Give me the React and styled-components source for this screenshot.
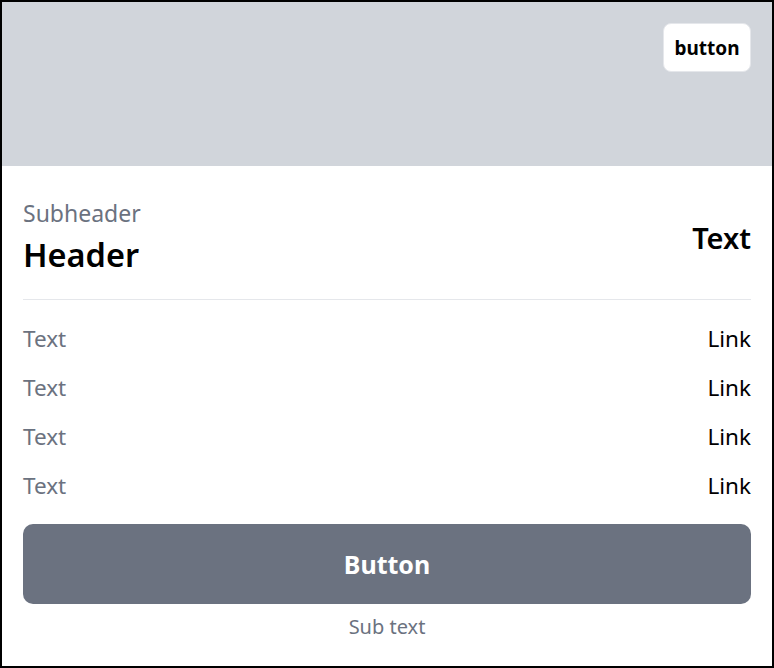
import React from "react";
import styled, { createGlobalStyle } from "styled-components";

const GlobalStyle = createGlobalStyle`
  html, body {
    margin: 0;
    padding: 0;
    background: #ffffff;
  }
  body {
    font-family: "Noto Sans", "Open Sans", sans-serif;
  }
  * {
    box-sizing: border-box;
  }
`;

const rows = [
  { label: "Text", link: "Link" },
  { label: "Text", link: "Link" },
  { label: "Text", link: "Link" },
  { label: "Text", link: "Link" },
];

export default function App() {
  return (
    <>
      <GlobalStyle />
      <Card>
        <Banner>
          <BannerButton>button</BannerButton>
        </Banner>
        <Body>
          <TitleRow>
            <TitleBlock>
              <Subheader>Subheader</Subheader>
              <Header>Header</Header>
            </TitleBlock>
            <TitleValue>Text</TitleValue>
          </TitleRow>
          <Divider />
          <List>
            {rows.map((row, i) => (
              <ListRow key={i}>
                <RowLabel>{row.label}</RowLabel>
                <RowLink href="#">{row.link}</RowLink>
              </ListRow>
            ))}
          </List>
          <PrimaryButton>Button</PrimaryButton>
          <SubText>Sub text</SubText>
        </Body>
      </Card>
    </>
  );
}

const Card = styled.div`
  width: 774px;
  height: 668px;
  border: 2px solid #000000;
  display: flex;
  flex-direction: column;
  background-color: #ffffff;
  overflow: hidden;
`;

const Banner = styled.div`
  height: 164px;
  background-color: #d1d5db;
  display: flex;
  justify-content: flex-end;
  align-items: flex-start;
  padding: 21px 21px 0 0;
`;

const BannerButton = styled.button`
  width: 88px;
  height: 49px;
  border: 1px solid #e5e7eb;
  border-radius: 8px;
  background-color: #ffffff;
  color: #000000;
  font-family: "Noto Sans", sans-serif;
  font-size: 19px;
  font-weight: 700;
  padding: 0;
  cursor: pointer;
`;

const Body = styled.div`
  display: flex;
  flex-direction: column;
  padding: 33px 21px 0 21px;
`;

const TitleRow = styled.div`
  display: flex;
  justify-content: space-between;
  align-items: center;
`;

const TitleBlock = styled.div`
  display: flex;
  flex-direction: column;
  gap: 7px;
`;

const Subheader = styled.div`
  font-size: 23px;
  line-height: 28px;
  color: #6b7280;
`;

const Header = styled.div`
  font-size: 32.5px;
  line-height: 42px;
  font-weight: 600;
  color: #000000;
`;

const TitleValue = styled.div`
  font-size: 29px;
  line-height: 36px;
  font-weight: 600;
  color: #000000;
`;

const Divider = styled.hr`
  margin: 23px 0 0 0;
  border: 0;
  height: 1px;
  background-color: #e5e7eb;
`;

const List = styled.div`
  display: flex;
  flex-direction: column;
  gap: 17px;
  margin-top: 23px;
`;

const ListRow = styled.div`
  display: flex;
  justify-content: space-between;
  align-items: center;
  height: 32px;
`;

const RowLabel = styled.span`
  font-size: 22.5px;
  line-height: 32px;
  color: #6b7280;
`;

const RowLink = styled.a`
  font-size: 22.5px;
  line-height: 32px;
  color: #000000;
  text-decoration: none;
`;

const PrimaryButton = styled.button`
  margin-top: 22px;
  height: 80px;
  width: 100%;
  border: 0;
  border-radius: 10px;
  background-color: #6b7280;
  color: #ffffff;
  font-family: "Noto Sans", sans-serif;
  font-size: 25px;
  font-weight: 700;
  cursor: pointer;
`;

const SubText = styled.div`
  margin-top: 9px;
  text-align: center;
  font-size: 20px;
  line-height: 28px;
  color: #6b7280;
`;
